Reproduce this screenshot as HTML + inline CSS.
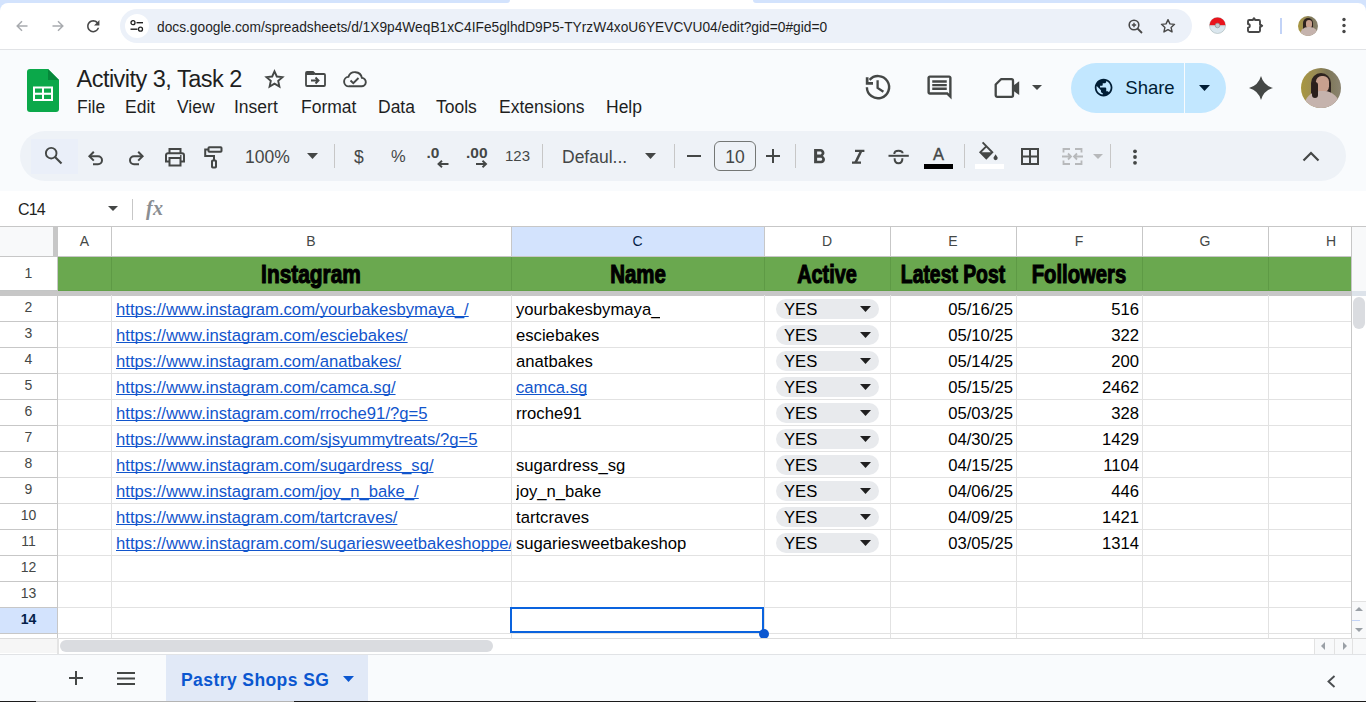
<!DOCTYPE html>
<html><head><meta charset="utf-8">
<style>
*{box-sizing:border-box;margin:0;padding:0}
html,body{width:1366px;height:702px;overflow:hidden;background:#f9fbfd;font-family:"Liberation Sans",sans-serif;color:#1f1f1f}
.a{position:absolute}
svg{position:absolute;overflow:visible}
#chrome{left:0;top:0;width:1366px;height:50px;background:#fff;border-bottom:1px solid #e1e3e6}
.tabstrip{top:0;height:3px;background:#d3e3fd}
.omni{left:120px;top:9px;width:1072px;height:34px;border-radius:17px;background:#ecf1f9}
.url{left:157px;top:19.5px;font-size:13.76px;color:#1f1f1f;white-space:nowrap;letter-spacing:0}
.menu{top:97px;font-size:17.5px;color:#1f1f1f;white-space:nowrap}
#tb{left:20px;top:131px;width:1326px;height:50px;border-radius:25px;background:#eef2f7}
.tbt{font-size:17.5px;color:#444746;white-space:nowrap}
.sep{width:1px;background:#c7c7c7;top:144px;height:24px}
#fbar{left:0;top:191px;width:1366px;height:36px;background:#fff;border-bottom:1px solid #c7c7c7}
#grid{left:0;top:227px;width:1352px;height:411px;background:#fff;overflow:hidden}
.hl{position:absolute;left:0;height:1px;background:#e2e2e2}
.vl{position:absolute;top:0;width:1px;background:#e2e2e2}
.ch{position:absolute;top:0;height:29px;font-size:14px;color:#444746;text-align:center;line-height:29px}
.rh{position:absolute;left:0;width:57px;text-align:center;font-size:14px;color:#444746}
.cell{position:absolute;color:#000;font-size:16.67px;white-space:nowrap;line-height:26px;height:28px;padding-top:2px;overflow:hidden}
.lnk{color:#1155cc;text-decoration:underline;text-decoration-skip-ink:none}
.hdr{position:absolute;top:30px;height:34px;font-weight:bold;font-size:25px;color:#000;line-height:34px;white-space:nowrap}
.hdr span{position:absolute;left:50%;top:0;transform:translateX(-50%) scaleX(0.75);-webkit-text-stroke:1.1px #000}
.chip{position:absolute;width:103px;height:20px;border-radius:10px;background:#e8eaed}
</style></head><body>
<!-- browser chrome -->
<div id="chrome" class="a"></div>
<div class="a tabstrip" style="left:0;width:510px;border-bottom-right-radius:6px"></div>
<div class="a tabstrip" style="left:753px;width:613px;border-bottom-left-radius:6px"></div>
<div class="a" style="left:0;top:3px;width:8px;height:8px;background:#d3e3fd"></div><div class="a" style="left:0;top:3px;width:16px;height:16px;background:#fff;border-top-left-radius:8px"></div><div class="a" style="left:1358px;top:3px;width:8px;height:8px;background:#d3e3fd"></div><div class="a" style="left:1350px;top:3px;width:16px;height:16px;background:#fff;border-top-right-radius:8px"></div>
<div class="a omni"></div>

<svg style="left:16px;top:20px" width="12" height="12" viewBox="0 0 12 12"><path d="M11.5 6H1.2M6 1.2L1.2 6L6 10.8" fill="none" stroke="#a8abaf" stroke-width="1.5"/></svg>
<svg style="left:52px;top:20px" width="12" height="12" viewBox="0 0 12 12"><path d="M0.5 6H10.8M6 1.2L10.8 6L6 10.8" fill="none" stroke="#a8abaf" stroke-width="1.5"/></svg>
<svg style="left:84.4px;top:17.2px" width="18.5" height="18.5" viewBox="0 0 24 24"><path fill="#474747" d="M17.65 6.35C16.2 4.9 14.21 4 12 4c-4.42 0-7.99 3.58-7.99 8s3.57 8 7.99 8c3.73 0 6.84-2.55 7.730-6h-2.08c-.82 2.33-3.04 4-5.65 4-3.31 0-6-2.69-6-6s2.69-6 6-6c1.66 0 3.14.69 4.22 1.78L13 11h7V4l-2.35 2.35z"/></svg>
<div class="a" style="left:125px;top:14px;width:24px;height:24px;border-radius:12px;background:#fff"></div>
<svg style="left:130px;top:20px" width="14" height="12" viewBox="0 0 14 12"><circle cx="3" cy="2.7" r="2" fill="none" stroke="#1f1f1f" stroke-width="1.3"/><path d="M6.5 2.7H13" stroke="#1f1f1f" stroke-width="1.4"/><circle cx="10.5" cy="9.2" r="2" fill="none" stroke="#1f1f1f" stroke-width="1.3"/><path d="M0.5 9.2H7.5" stroke="#1f1f1f" stroke-width="1.4"/></svg>
<div class="a url">docs.google.com/spreadsheets/d/1X9p4WeqB1xC4IFe5glhdD9P5-TYrzW4xoU6YEVCVU04/edit?gid=0#gid=0</div>
<svg style="left:1128px;top:19px" width="15" height="15" viewBox="0 0 15 15"><circle cx="6" cy="6" r="4.8" fill="none" stroke="#474747" stroke-width="1.6"/><path d="M9.5 9.5L14 14" stroke="#474747" stroke-width="1.8"/><path d="M6 3.8V8.2M3.8 6H8.2" stroke="#474747" stroke-width="1.4"/></svg>
<svg style="left:1160px;top:18px" width="16" height="16" viewBox="0 0 24 24"><path d="M12 2.5l2.9 6.3 6.9.7-5.2 4.6 1.5 6.8L12 17.4 5.9 20.9l1.5-6.8-5.2-4.6 6.9-.7z" fill="none" stroke="#474747" stroke-width="2.1" stroke-linejoin="round"/></svg>
<svg style="left:1209.2px;top:17.2px" width="17" height="17" viewBox="0 0 17 17"><circle cx="8.5" cy="8.5" r="8" fill="#dbe7ee" stroke="#9aa" stroke-width=".5"/><path d="M0.5 8.5A8 8 0 0 1 16.5 8.5Z" fill="#e8141c"/><path d="M0.5 8.8H16.5" stroke="#c8ced2" stroke-width="1"/><circle cx="8.5" cy="8.5" r="2.3" fill="#c4c9cc" stroke="#8d9396" stroke-width=".7"/></svg>
<svg style="left:1240px;top:10px" width="30" height="30" viewBox="1240 10 30 30"><path d="M1249.2 20H1252.6L1254 18.2L1255.4 20H1258.8a1.2 1.2 0 0 1 1.2 1.2V24.3L1262.2 25.8L1260 27.3V30.8a1.2 1.2 0 0 1-1.2 1.2H1249.2a1.2 1.2 0 0 1-1.2-1.2V27.6a1.8 1.8 0 0 0 0-3.6V21.2a1.2 1.2 0 0 1 1.2-1.2z" fill="none" stroke="#474747" stroke-width="1.9" stroke-linejoin="round"/><path d="M1252.3 20.5L1254 17.8L1255.7 20.5Z M1259.5 24L1262.8 25.8L1259.5 27.6Z" fill="#474747"/></svg>
<div class="a" style="left:1280px;top:18px;width:2px;height:16px;background:#c2d3f7"></div>
<div class="a" style="left:1298px;top:15.5px;width:20px;height:20px;border-radius:10px;overflow:hidden;background:linear-gradient(90deg,#a8963f 0%,#9a8c55 35%,#7d7656 65%,#8b8470 100%)"><div class="a" style="left:5px;top:2px;width:10px;height:14px;border-radius:5px 5px 2px 2px;background:#2e231f"></div><div class="a" style="left:7.5px;top:4px;width:6.5px;height:8.5px;border-radius:3px;background:#c8a08e"></div><div class="a" style="left:1.5px;top:11.5px;width:18px;height:11px;border-radius:8px 8px 0 0;background:#c5b3ad"></div></div>
<svg style="left:1342px;top:17px" width="4" height="17" viewBox="0 0 4 17"><circle cx="2" cy="2.5" r="1.7" fill="#474747"/><circle cx="2" cy="8.5" r="1.7" fill="#474747"/><circle cx="2" cy="14.5" r="1.7" fill="#474747"/></svg>

<!-- sheets header -->
<svg style="left:27px;top:69px" width="32" height="43" viewBox="0 0 32 43"><path d="M3 0H21L32 11V40a3 3 0 0 1-3 3H3a3 3 0 0 1-3-3V3a3 3 0 0 1 3-3z" fill="#0ba84a"/><path d="M21 0L32 11H21z" fill="#06873a"/><rect x="6" y="17.5" width="20" height="14.5" fill="#fff"/><rect x="8" y="19.5" width="7" height="4.2" fill="#0ba84a"/><rect x="17" y="19.5" width="7" height="4.2" fill="#0ba84a"/><rect x="8" y="25.8" width="7" height="4.2" fill="#0ba84a"/><rect x="17" y="25.8" width="7" height="4.2" fill="#0ba84a"/></svg>
<div class="a" style="left:76.5px;top:66px;font-size:23.5px;letter-spacing:-0.52px;color:#1f1f1f;white-space:nowrap">Activity 3, Task 2</div>
<svg style="left:264px;top:69px" width="21" height="19" viewBox="0 0 21 19"><path d="M10.5 2.3l2.3 5.2 5.7.6-4.3 3.8 1.2 5.6-4.9-2.9-4.9 2.9 1.2-5.6-4.3-3.8 5.7-.6z" fill="none" stroke="#444746" stroke-width="1.9" stroke-linejoin="miter"/></svg>
<svg style="left:305px;top:71px" width="21" height="16" viewBox="0 0 21 16"><path d="M2 1H8L10 3H19a1 1 0 0 1 1 1V14a1 1 0 0 1-1 1H2a1 1 0 0 1-1-1V2a1 1 0 0 1 1-1z" fill="none" stroke="#444746" stroke-width="1.8"/><path d="M1 1.5H9V4H1z" fill="#444746"/><path d="M6 9.5H13M10.5 6.5L13.5 9.5L10.5 12.5" fill="none" stroke="#444746" stroke-width="1.9"/></svg>
<svg style="left:343px;top:71px" width="24" height="17" viewBox="0 0 24 17"><path d="M6.2 15.3H18.3a4.2 4.2 0 0 0 .6-8.4A7 7 0 0 0 5.4 5.9 4.7 4.7 0 0 0 6.2 15.3z" fill="none" stroke="#444746" stroke-width="1.9"/><path d="M7.5 9.5L10.3 12.2L15.5 7" fill="none" stroke="#444746" stroke-width="1.9"/></svg>
<div class="a menu" style="left:77px">File</div>
<div class="a menu" style="left:125px">Edit</div>
<div class="a menu" style="left:177px">View</div>
<div class="a menu" style="left:234px">Insert</div>
<div class="a menu" style="left:301px">Format</div>
<div class="a menu" style="left:378px">Data</div>
<div class="a menu" style="left:436px">Tools</div>
<div class="a menu" style="left:499px">Extensions</div>
<div class="a menu" style="left:606px">Help</div>

<!-- header right -->
<svg style="left:860px;top:70px" width="36" height="36" viewBox="0 0 36 36"><path d="M6.9 17.2A11.1 11.1 0 1 0 9.6 9.9" fill="none" stroke="#444746" stroke-width="2.4"/><path d="M5.8 7.3H8.5V12H13V14.7H5.8Z" fill="#444746"/><path d="M17.6 10.2V17.9L23.4 21.7" fill="none" stroke="#444746" stroke-width="2.3"/></svg>
<svg style="left:925px;top:73px" width="29" height="29" viewBox="0 0 24 24"><path fill="#444746" d="M21.99 4c0-1.1-.89-2-1.99-2H4c-1.1 0-2 .9-2 2v12c0 1.1.9 2 2 2h14l4 4-.01-18zM20 4v13.17L18.83 16H4V4h16zM6 12h12v2H6zm0-3h12v2H6zm0-3h12v2H6z"/></svg>
<svg style="left:994px;top:78px" width="27" height="21" viewBox="0 0 27 21"><path d="M7 1.2H17.5a1.5 1.5 0 0 1 1.5 1.5V17.3a1.5 1.5 0 0 1-1.5 1.5H3.2a1.5 1.5 0 0 1-1.5-1.5V6.5z" fill="none" stroke="#444746" stroke-width="2.3" stroke-linejoin="round"/><path d="M19 7.8L25.2 3.3V17.1L19 12.6z" fill="#444746"/></svg>
<svg style="left:1032px;top:85px" width="10" height="5" viewBox="0 0 10 5"><path d="M0 0H10L5 5z" fill="#444746"/></svg>
<div class="a" style="left:1071px;top:63px;width:155px;height:50px;border-radius:25px;background:#c2e7ff"></div>
<div class="a" style="left:1184px;top:63px;width:1px;height:50px;background:#f9fbfd"></div>
<svg style="left:1092.9px;top:77px" width="21.2" height="21.2" viewBox="0 0 24 24"><path fill="#001d35" d="M12 2C6.48 2 2 6.48 2 12s4.48 10 10 10 10-4.480 10-10S17.52 2 12 2zm-1 17.93c-3.95-.49-7-3.85-7-7.93 0-.62.08-1.21.21-1.79L9 15v1c0 1.1.9 2 2 2v1.930zm6.9-2.54c-.26-.81-1-1.39-1.9-1.39h-1v-3c0-.55-.45-1-1-1H8v-2h2c.55 0 1-.45 1-1V7h2c1.1 0 2-.9 2-2v-.41c2.93 1.19 5 4.06 5 7.41 0 2.08-.8 3.970-2.1 5.39z"/></svg>
<div class="a" style="left:1125.3px;top:76.5px;font-size:18.5px;color:#001d35;white-space:nowrap">Share</div>
<svg style="left:1199px;top:85px" width="11" height="6" viewBox="0 0 11 6"><path d="M0 0H11L5.5 6z" fill="#001d35"/></svg>
<svg style="left:1248.5px;top:76px" width="24" height="24" viewBox="0 0 24 24"><path fill="#444746" d="M12 0Q14.6 9.4 24 12Q14.6 14.6 12 24Q9.4 14.6 0 12Q9.4 9.4 12 0Z"/></svg>
<div class="a" style="left:1301px;top:68px;width:40px;height:40px;border-radius:20px;overflow:hidden;background:linear-gradient(90deg,#a8963f 0%,#9a8c55 35%,#7d7656 65%,#8b8470 100%)">
 <div class="a" style="left:10px;top:5px;width:20px;height:28px;border-radius:10px 10px 4px 4px;background:#2e231f"></div>
 <div class="a" style="left:15px;top:8px;width:13px;height:17px;border-radius:6px 6px 7px 7px;background:#c8a08e"></div>
 <div class="a" style="left:3px;top:23px;width:36px;height:22px;border-radius:16px 16px 0 0;background:#c5b3ad"></div>
 <div class="a" style="left:11px;top:14px;width:6px;height:16px;border-radius:3px;background:#2a1f1b"></div>
</div>
<!-- toolbar -->
<div id="tb" class="a"></div>
<div class="a" style="left:31px;top:139px;width:47px;height:35px;background:#eaeff9"></div>
<svg style="left:43px;top:145px" width="21" height="21" viewBox="0 0 21 21"><circle cx="8.2" cy="8.2" r="5.3" fill="none" stroke="#444746" stroke-width="1.9"/><path d="M12 12L18.5 18.5" stroke="#444746" stroke-width="2.1"/></svg>
<svg style="left:87px;top:150px" width="18" height="16" viewBox="0 0 18 16"><path d="M3 6.2H11a4 4 0 0 1 0 8H6" fill="none" stroke="#444746" stroke-width="2"/><path d="M6.8 1.8L2.4 6.2L6.8 10.6" fill="none" stroke="#444746" stroke-width="2"/></svg>
<svg style="left:127px;top:150px" width="18" height="16" viewBox="0 0 18 16"><path d="M15 6.2H7a4 4 0 0 0 0 8H12" fill="none" stroke="#444746" stroke-width="2"/><path d="M11.2 1.8L15.6 6.2L11.2 10.6" fill="none" stroke="#444746" stroke-width="2"/></svg>
<svg style="left:164px;top:147px" width="22" height="20" viewBox="0 0 22 20"><path d="M5.5 6V2H16.5V6" fill="none" stroke="#444746" stroke-width="2"/><path d="M5.5 14.5H2V8.2a2 2 0 0 1 2-2H18a2 2 0 0 1 2 2V14.5H16.5" fill="none" stroke="#444746" stroke-width="2"/><rect x="5.5" y="11" width="11" height="7.5" fill="none" stroke="#444746" stroke-width="2"/><circle cx="16.8" cy="9" r=".9" fill="#444746"/></svg>
<svg style="left:203px;top:146px" width="20" height="23" viewBox="0 0 20 23"><rect x="5.5" y="1.2" width="13" height="4.6" rx=".8" fill="none" stroke="#444746" stroke-width="2"/><path d="M5.5 3.5H2.2V10H11V14" fill="none" stroke="#444746" stroke-width="2"/><rect x="9" y="14.5" width="4" height="7" rx=".8" fill="none" stroke="#444746" stroke-width="2"/></svg>
<div class="a tbt" style="left:245px;top:147px">100%</div>
<svg style="left:307px;top:153px" width="11" height="6" viewBox="0 0 11 6"><path d="M0 0H11L5.5 6z" fill="#444746"/></svg>
<div class="a sep" style="left:334px"></div>
<div class="a tbt" style="left:354px;top:147px">$</div>
<div class="a tbt" style="left:391px;top:147px;font-size:16.5px">%</div>
<div class="a" style="left:426.5px;top:143.5px;font-size:15.5px;font-weight:bold;color:#444746">.0</div>
<svg style="left:437px;top:159.5px" width="12" height="8" viewBox="0 0 12 8"><path d="M11.5 4H2M5 0.8L1.5 4L5 7.2" fill="none" stroke="#444746" stroke-width="1.9"/></svg>
<div class="a" style="left:466px;top:143.5px;font-size:15.5px;font-weight:bold;color:#444746;letter-spacing:0px">.00</div>
<svg style="left:476px;top:159.5px" width="12" height="8" viewBox="0 0 12 8"><path d="M0 4H9.5M6.5 0.8L10 4L6.5 7.2" fill="none" stroke="#444746" stroke-width="1.9"/></svg>
<div class="a" style="left:505px;top:147px;font-size:15px;color:#444746">123</div>
<div class="a sep" style="left:542px"></div>
<div class="a tbt" style="left:562px;top:147px">Defaul...</div>
<svg style="left:645px;top:153px" width="11" height="6" viewBox="0 0 11 6"><path d="M0 0H11L5.5 6z" fill="#444746"/></svg>
<div class="a sep" style="left:674px"></div>
<div class="a" style="left:687px;top:155px;width:14px;height:2px;background:#444746"></div>
<div class="a" style="left:714px;top:141px;width:42px;height:30px;border:1px solid #747775;border-radius:6px"></div>
<div class="a tbt" style="left:714px;top:147px;width:42px;text-align:center">10</div>
<div class="a" style="left:766px;top:155px;width:14px;height:2px;background:#444746"></div>
<div class="a" style="left:772px;top:149px;width:2px;height:14px;background:#444746"></div>
<div class="a sep" style="left:795px"></div>
<svg style="left:806.6px;top:144.9px" width="24.3" height="24.3" viewBox="0 0 24 24"><path fill="#444746" d="M15.6 10.79c.97-.67 1.65-1.77 1.65-2.79 0-2.26-1.75-4-4-4H7v14h7.04c2.090 0 3.71-1.7 3.71-3.79 0-1.52-.86-2.82-2.15-3.42zM10 6.5h3c.83 0 1.5.67 1.5 1.5s-.67 1.5-1.5 1.5h-3v-3zm3.5 9H10v-3h3.5c.83 0 1.5.67 1.5 1.5s-.67 1.5-1.5 1.5z"/></svg>
<svg style="left:850px;top:146px" width="16" height="20" viewBox="0 0 16 20"><path d="M5 4.8H14.4M2 16.6H11" stroke="#444746" stroke-width="2.3"/><path d="M11.3 4.8L5.5 16.6" stroke="#444746" stroke-width="2.5"/></svg>
<svg style="left:888px;top:146px" width="21" height="20" viewBox="0 0 21 20"><path d="M0.5 9.8H20.8" stroke="#444746" stroke-width="2"/><path d="M6.3 8C6.3 5.6 8.3 4.7 10.5 4.7S14.6 5.5 14.6 7.3" fill="none" stroke="#444746" stroke-width="2"/><path d="M6.6 12.2C6.6 15.6 8.5 17.3 10.5 17.3S14.4 15.6 14.4 12.2" fill="none" stroke="#444746" stroke-width="2"/></svg>
<div class="a" style="left:933px;top:144.5px;font-size:16.5px;color:#444746;-webkit-text-stroke:0.4px #444746">A</div>
<div class="a" style="left:924px;top:164px;width:29px;height:5px;background:#000"></div>
<div class="a sep" style="left:964px"></div>
<svg style="left:972px;top:138px" width="32" height="34" viewBox="0 0 32 34"><path d="M10.6 4.3L20.3 14.3L14.3 20.3L8.3 14.3L14 8.6" fill="none" stroke="#444746" stroke-width="1.9" stroke-linejoin="miter"/><path d="M8.5 14.3H20.3L14.3 20.3Z" fill="#444746"/><path d="M23.6 16.2C22.6 17.8 21.5 19 21.5 20.1a2.1 2.1 0 0 0 4.2 0C25.7 19 24.6 17.8 23.6 16.2Z" fill="#444746"/></svg>
<div class="a" style="left:975px;top:164px;width:29px;height:5px;background:#fff"></div>
<svg style="left:1021px;top:148px" width="18" height="17" viewBox="0 0 18 17"><rect x="1" y="1" width="16" height="15" fill="none" stroke="#444746" stroke-width="2"/><path d="M9 1V16M1 8.5H17" stroke="#444746" stroke-width="2"/></svg>
<svg style="left:1062px;top:148px" width="21" height="17" viewBox="0 0 21 17"><path d="M8 1H1.5V4.5M1.5 12.5V16H8M13 1H19.5V4.5M19.5 12.5V16H13" fill="none" stroke="#b7b9bb" stroke-width="1.8"/><path d="M0 8.5H9M6 5.5L9 8.5L6 11.5M21 8.5H12M15 5.5L12 8.5L15 11.5" fill="none" stroke="#b7b9bb" stroke-width="1.8"/></svg>
<svg style="left:1093px;top:154px" width="10" height="5" viewBox="0 0 10 5"><path d="M0 0H10L5 5z" fill="#b7b9bb"/></svg>
<div class="a sep" style="left:1110px"></div>
<svg style="left:1132px;top:148px" width="6" height="18" viewBox="0 0 6 18"><circle cx="3" cy="3.3" r="1.9" fill="#444746"/><circle cx="3" cy="9" r="1.9" fill="#444746"/><circle cx="3" cy="14.8" r="1.9" fill="#444746"/></svg>
<svg style="left:1302px;top:151px" width="18" height="11" viewBox="0 0 18 11"><path d="M1.5 9.5L9 2L16.5 9.5" fill="none" stroke="#444746" stroke-width="2.2"/></svg>

<!-- formula bar -->
<div id="fbar" class="a"></div>
<div class="a" style="left:18px;top:200.5px;font-size:16px;color:#1f1f1f;letter-spacing:-0.9px">C14</div>
<svg style="left:108px;top:206px" width="10" height="5" viewBox="0 0 10 5"><path d="M0 0H10L5 5z" fill="#444746"/></svg>
<div class="a" style="left:132px;top:199px;width:1px;height:21px;background:#c7c7c7"></div>
<div class="a" style="left:146px;top:196.5px;font-family:'Liberation Serif',serif;font-style:italic;font-weight:bold;font-size:20px;color:#8a8e92;letter-spacing:0.3px">fx</div>
<!-- grid -->
<div id="grid" class="a">
<div class="a" style="left:0px;top:0px;width:53px;height:29px;background:#f8f9fa"></div>
<div class="a" style="left:53px;top:0px;width:5px;height:29px;background:#c7c7c7"></div>
<div class="a" style="left:512px;top:0px;width:252px;height:29px;background:#d3e3fd"></div>
<div class="a" style="left:0px;top:29px;width:1351px;height:1px;background:#c7c7c7"></div>
<div class="a" style="left:111px;top:0px;width:1px;height:29px;background:#c7c7c7"></div>
<div class="a" style="left:511px;top:0px;width:1px;height:29px;background:#c7c7c7"></div>
<div class="a" style="left:764px;top:0px;width:1px;height:29px;background:#c7c7c7"></div>
<div class="a" style="left:890px;top:0px;width:1px;height:29px;background:#c7c7c7"></div>
<div class="a" style="left:1016px;top:0px;width:1px;height:29px;background:#c7c7c7"></div>
<div class="a" style="left:1142px;top:0px;width:1px;height:29px;background:#c7c7c7"></div>
<div class="a" style="left:1268px;top:0px;width:1px;height:29px;background:#c7c7c7"></div>
<div class="a ch" style="left:58px;width:53px;">A</div>
<div class="a ch" style="left:111px;width:400px;">B</div>
<div class="a ch" style="left:511px;width:253px;color:#041e49">C</div>
<div class="a ch" style="left:764px;width:126px;">D</div>
<div class="a ch" style="left:890px;width:126px;">E</div>
<div class="a ch" style="left:1016px;width:126px;">F</div>
<div class="a ch" style="left:1142px;width:126px;">G</div>
<div class="a ch" style="left:1268px;width:126px;">H</div>
<div class="a" style="left:58px;top:30px;width:1293px;height:34px;background:#6aa84f"></div>
<div class="a" style="left:111px;top:30px;width:1px;height:34px;background:#5e9a45"></div>
<div class="a" style="left:511px;top:30px;width:1px;height:34px;background:#5e9a45"></div>
<div class="a" style="left:764px;top:30px;width:1px;height:34px;background:#5e9a45"></div>
<div class="a" style="left:890px;top:30px;width:1px;height:34px;background:#5e9a45"></div>
<div class="a" style="left:1016px;top:30px;width:1px;height:34px;background:#5e9a45"></div>
<div class="a" style="left:1142px;top:30px;width:1px;height:34px;background:#5e9a45"></div>
<div class="a" style="left:1268px;top:30px;width:1px;height:34px;background:#5e9a45"></div>
<div class="a" style="left:58px;top:63px;width:1293px;height:1px;background:#62a048"></div>
<div class="a" style="left:0px;top:63px;width:57px;height:1px;background:#c4c6c6"></div>
<div class="a" style="left:0px;top:64px;width:1351px;height:5px;background:#c7c7c7"></div>
<div class="a" style="left:57px;top:30px;width:1px;height:381px;background:#c7c7c7"></div>
<div class="a" style="left:0px;top:381px;width:57px;height:25px;background:#d3e3fd"></div>
<div class="a" style="left:0px;top:94px;width:57px;height:1px;background:#c7c7c7"></div>
<div class="a" style="left:58px;top:94px;width:1293px;height:1px;background:#e2e2e2"></div>
<div class="a" style="left:0px;top:120px;width:57px;height:1px;background:#c7c7c7"></div>
<div class="a" style="left:58px;top:120px;width:1293px;height:1px;background:#e2e2e2"></div>
<div class="a" style="left:0px;top:146px;width:57px;height:1px;background:#c7c7c7"></div>
<div class="a" style="left:58px;top:146px;width:1293px;height:1px;background:#e2e2e2"></div>
<div class="a" style="left:0px;top:172px;width:57px;height:1px;background:#c7c7c7"></div>
<div class="a" style="left:58px;top:172px;width:1293px;height:1px;background:#e2e2e2"></div>
<div class="a" style="left:0px;top:198px;width:57px;height:1px;background:#c7c7c7"></div>
<div class="a" style="left:58px;top:198px;width:1293px;height:1px;background:#e2e2e2"></div>
<div class="a" style="left:0px;top:224px;width:57px;height:1px;background:#c7c7c7"></div>
<div class="a" style="left:58px;top:224px;width:1293px;height:1px;background:#e2e2e2"></div>
<div class="a" style="left:0px;top:250px;width:57px;height:1px;background:#c7c7c7"></div>
<div class="a" style="left:58px;top:250px;width:1293px;height:1px;background:#e2e2e2"></div>
<div class="a" style="left:0px;top:276px;width:57px;height:1px;background:#c7c7c7"></div>
<div class="a" style="left:58px;top:276px;width:1293px;height:1px;background:#e2e2e2"></div>
<div class="a" style="left:0px;top:302px;width:57px;height:1px;background:#c7c7c7"></div>
<div class="a" style="left:58px;top:302px;width:1293px;height:1px;background:#e2e2e2"></div>
<div class="a" style="left:0px;top:328px;width:57px;height:1px;background:#c7c7c7"></div>
<div class="a" style="left:58px;top:328px;width:1293px;height:1px;background:#e2e2e2"></div>
<div class="a" style="left:0px;top:354px;width:57px;height:1px;background:#c7c7c7"></div>
<div class="a" style="left:58px;top:354px;width:1293px;height:1px;background:#e2e2e2"></div>
<div class="a" style="left:0px;top:380px;width:57px;height:1px;background:#c7c7c7"></div>
<div class="a" style="left:58px;top:380px;width:1293px;height:1px;background:#e2e2e2"></div>
<div class="a" style="left:0px;top:406px;width:57px;height:1px;background:#c7c7c7"></div>
<div class="a" style="left:58px;top:406px;width:1293px;height:1px;background:#e2e2e2"></div>
<div class="a" style="left:111px;top:68px;width:1px;height:343px;background:#e2e2e2"></div>
<div class="a" style="left:511px;top:68px;width:1px;height:343px;background:#e2e2e2"></div>
<div class="a" style="left:764px;top:68px;width:1px;height:343px;background:#e2e2e2"></div>
<div class="a" style="left:890px;top:68px;width:1px;height:343px;background:#e2e2e2"></div>
<div class="a" style="left:1016px;top:68px;width:1px;height:343px;background:#e2e2e2"></div>
<div class="a" style="left:1142px;top:68px;width:1px;height:343px;background:#e2e2e2"></div>
<div class="a" style="left:1268px;top:68px;width:1px;height:343px;background:#e2e2e2"></div>
<div class="a" style="left:1351px;top:0px;width:1px;height:411px;background:#c7c7c7"></div>
<div class="a rh" style="top:30px;height:33px;line-height:33px;">1</div>
<div class="a rh" style="top:68px;height:26px;line-height:24px;">2</div>
<div class="a rh" style="top:94px;height:26px;line-height:24px;">3</div>
<div class="a rh" style="top:120px;height:26px;line-height:24px;">4</div>
<div class="a rh" style="top:146px;height:26px;line-height:24px;">5</div>
<div class="a rh" style="top:172px;height:26px;line-height:24px;">6</div>
<div class="a rh" style="top:198px;height:26px;line-height:24px;">7</div>
<div class="a rh" style="top:224px;height:26px;line-height:24px;">8</div>
<div class="a rh" style="top:250px;height:26px;line-height:24px;">9</div>
<div class="a rh" style="top:276px;height:26px;line-height:24px;">10</div>
<div class="a rh" style="top:302px;height:26px;line-height:24px;">11</div>
<div class="a rh" style="top:328px;height:26px;line-height:24px;">12</div>
<div class="a rh" style="top:354px;height:26px;line-height:24px;">13</div>
<div class="a rh" style="top:380px;height:26px;line-height:24px;font-weight:bold;color:#041e49">14</div>
<div class="a hdr" style="left:111px;width:400px"><span style="transform:translateX(-50%) scaleX(0.835)">Instagram</span></div>
<div class="a hdr" style="left:511px;width:253px"><span style="transform:translateX(-50%) scaleX(0.817)">Name</span></div>
<div class="a hdr" style="left:764px;width:126px"><span style="transform:translateX(-50%) scaleX(0.794)">Active</span></div>
<div class="a hdr" style="left:890px;width:126px"><span style="transform:translateX(-50%) scaleX(0.774)">Latest Post</span></div>
<div class="a hdr" style="left:1016px;width:126px"><span style="transform:translateX(-50%) scaleX(0.81)">Followers</span></div>
<div class="a cell lnk" style="left:116px;top:68px;width:395px">https://www.instagram.com/yourbakesbymaya_/</div>
<div class="a cell" style="left:516px;top:68px">yourbakesbymaya_</div>
<div class="a chip" style="left:776px;top:71.5px"></div>
<div class="a cell" style="left:784px;top:68px">YES</div>
<svg style="left:860px;top:78.5px" width="11" height="6" viewBox="0 0 11 6"><path d="M0 0H11L5.5 6z" fill="#1f1f1f"/></svg>
<div class="a cell" style="left:890px;top:68px;width:123px;text-align:right">05/16/25</div>
<div class="a cell" style="left:1016px;top:68px;width:123px;text-align:right">516</div>
<div class="a cell lnk" style="left:116px;top:94px;width:395px">https://www.instagram.com/esciebakes/</div>
<div class="a cell" style="left:516px;top:94px">esciebakes</div>
<div class="a chip" style="left:776px;top:97.5px"></div>
<div class="a cell" style="left:784px;top:94px">YES</div>
<svg style="left:860px;top:104.5px" width="11" height="6" viewBox="0 0 11 6"><path d="M0 0H11L5.5 6z" fill="#1f1f1f"/></svg>
<div class="a cell" style="left:890px;top:94px;width:123px;text-align:right">05/10/25</div>
<div class="a cell" style="left:1016px;top:94px;width:123px;text-align:right">322</div>
<div class="a cell lnk" style="left:116px;top:120px;width:395px">https://www.instagram.com/anatbakes/</div>
<div class="a cell" style="left:516px;top:120px">anatbakes</div>
<div class="a chip" style="left:776px;top:123.5px"></div>
<div class="a cell" style="left:784px;top:120px">YES</div>
<svg style="left:860px;top:130.5px" width="11" height="6" viewBox="0 0 11 6"><path d="M0 0H11L5.5 6z" fill="#1f1f1f"/></svg>
<div class="a cell" style="left:890px;top:120px;width:123px;text-align:right">05/14/25</div>
<div class="a cell" style="left:1016px;top:120px;width:123px;text-align:right">200</div>
<div class="a cell lnk" style="left:116px;top:146px;width:395px">https://www.instagram.com/camca.sg/</div>
<div class="a cell lnk" style="left:516px;top:146px">camca.sg</div>
<div class="a chip" style="left:776px;top:149.5px"></div>
<div class="a cell" style="left:784px;top:146px">YES</div>
<svg style="left:860px;top:156.5px" width="11" height="6" viewBox="0 0 11 6"><path d="M0 0H11L5.5 6z" fill="#1f1f1f"/></svg>
<div class="a cell" style="left:890px;top:146px;width:123px;text-align:right">05/15/25</div>
<div class="a cell" style="left:1016px;top:146px;width:123px;text-align:right">2462</div>
<div class="a cell lnk" style="left:116px;top:172px;width:395px">https://www.instagram.com/rroche91/?g=5</div>
<div class="a cell" style="left:516px;top:172px">rroche91</div>
<div class="a chip" style="left:776px;top:175.5px"></div>
<div class="a cell" style="left:784px;top:172px">YES</div>
<svg style="left:860px;top:182.5px" width="11" height="6" viewBox="0 0 11 6"><path d="M0 0H11L5.5 6z" fill="#1f1f1f"/></svg>
<div class="a cell" style="left:890px;top:172px;width:123px;text-align:right">05/03/25</div>
<div class="a cell" style="left:1016px;top:172px;width:123px;text-align:right">328</div>
<div class="a cell lnk" style="left:116px;top:198px;width:395px">https://www.instagram.com/sjsyummytreats/?g=5</div>
<div class="a chip" style="left:776px;top:201.5px"></div>
<div class="a cell" style="left:784px;top:198px">YES</div>
<svg style="left:860px;top:208.5px" width="11" height="6" viewBox="0 0 11 6"><path d="M0 0H11L5.5 6z" fill="#1f1f1f"/></svg>
<div class="a cell" style="left:890px;top:198px;width:123px;text-align:right">04/30/25</div>
<div class="a cell" style="left:1016px;top:198px;width:123px;text-align:right">1429</div>
<div class="a cell lnk" style="left:116px;top:224px;width:395px">https://www.instagram.com/sugardress_sg/</div>
<div class="a cell" style="left:516px;top:224px">sugardress_sg</div>
<div class="a chip" style="left:776px;top:227.5px"></div>
<div class="a cell" style="left:784px;top:224px">YES</div>
<svg style="left:860px;top:234.5px" width="11" height="6" viewBox="0 0 11 6"><path d="M0 0H11L5.5 6z" fill="#1f1f1f"/></svg>
<div class="a cell" style="left:890px;top:224px;width:123px;text-align:right">04/15/25</div>
<div class="a cell" style="left:1016px;top:224px;width:123px;text-align:right">1104</div>
<div class="a cell lnk" style="left:116px;top:250px;width:395px">https://www.instagram.com/joy_n_bake_/</div>
<div class="a cell" style="left:516px;top:250px">joy_n_bake</div>
<div class="a chip" style="left:776px;top:253.5px"></div>
<div class="a cell" style="left:784px;top:250px">YES</div>
<svg style="left:860px;top:260.5px" width="11" height="6" viewBox="0 0 11 6"><path d="M0 0H11L5.5 6z" fill="#1f1f1f"/></svg>
<div class="a cell" style="left:890px;top:250px;width:123px;text-align:right">04/06/25</div>
<div class="a cell" style="left:1016px;top:250px;width:123px;text-align:right">446</div>
<div class="a cell lnk" style="left:116px;top:276px;width:395px">https://www.instagram.com/tartcraves/</div>
<div class="a cell" style="left:516px;top:276px">tartcraves</div>
<div class="a chip" style="left:776px;top:279.5px"></div>
<div class="a cell" style="left:784px;top:276px">YES</div>
<svg style="left:860px;top:286.5px" width="11" height="6" viewBox="0 0 11 6"><path d="M0 0H11L5.5 6z" fill="#1f1f1f"/></svg>
<div class="a cell" style="left:890px;top:276px;width:123px;text-align:right">04/09/25</div>
<div class="a cell" style="left:1016px;top:276px;width:123px;text-align:right">1421</div>
<div class="a cell lnk" style="left:116px;top:302px;width:395px">https://www.instagram.com/sugariesweetbakeshoppe/</div>
<div class="a cell" style="left:516px;top:302px">sugariesweetbakeshop</div>
<div class="a chip" style="left:776px;top:305.5px"></div>
<div class="a cell" style="left:784px;top:302px">YES</div>
<svg style="left:860px;top:312.5px" width="11" height="6" viewBox="0 0 11 6"><path d="M0 0H11L5.5 6z" fill="#1f1f1f"/></svg>
<div class="a cell" style="left:890px;top:302px;width:123px;text-align:right">03/05/25</div>
<div class="a cell" style="left:1016px;top:302px;width:123px;text-align:right">1314</div>
<div class="a" style="left:510px;top:380px;width:254px;height:26px;border:2px solid #0a63de"></div>
<div class="a" style="left:759px;top:401.5px;width:10px;height:10px;border-radius:5px;background:#0b57d0"></div>
</div>
<!-- vertical scrollbar -->
<div class="a" style="left:1352px;top:227px;width:14px;height:411px;background:#fff"></div>
<div class="a" style="left:1352px;top:227px;width:14px;height:64px;background:#f8f9fa"></div>
<div class="a" style="left:1352px;top:291px;width:14px;height:5px;background:#dde3ea"></div>
<div class="a" style="left:1353px;top:297px;width:12px;height:32px;border-radius:6px;background:#dadce0"></div>
<div class="a" style="left:1352px;top:601px;width:14px;height:37px;background:#f8f9fa;border-top:1px solid #e2e2e2"></div>
<div class="a" style="left:1352px;top:620px;width:8px;height:1px;background:#c2d3f7"></div>
<svg style="left:1355px;top:607px" width="8" height="4" viewBox="0 0 8 4"><path d="M0 4H8L4 0z" fill="#9aa0a6"/></svg>
<svg style="left:1355px;top:628px" width="8" height="4" viewBox="0 0 8 4"><path d="M0 0H8L4 4z" fill="#9aa0a6"/></svg>
<!-- horizontal scrollbar -->
<div class="a" style="left:0;top:638px;width:1366px;height:16px;background:#fff;border-top:1px solid #dcdcdc"></div>
<div class="a" style="left:0;top:639px;width:57px;height:14px;background:#f6f6f6"></div>
<div class="a" style="left:57px;top:638px;width:2px;height:16px;background:#e4e4e4"></div>
<div class="a" style="left:60px;top:640px;width:433px;height:12px;border-radius:6px;background:#dadce0"></div>
<div class="a" style="left:1314px;top:639px;width:38px;height:15px;background:#f8f9fa;border-left:1px solid #e2e2e2"></div>
<div class="a" style="left:1334px;top:639px;width:1px;height:15px;background:#e2e2e2"></div>
<div class="a" style="left:1352px;top:639px;width:14px;height:15px;background:#f8f9fa;border-left:1px solid #e2e2e2"></div>
<svg style="left:1321px;top:642px" width="4" height="8" viewBox="0 0 4 8"><path d="M4 0V8L0 4z" fill="#9aa0a6"/></svg>
<svg style="left:1343px;top:642px" width="4" height="8" viewBox="0 0 4 8"><path d="M0 0V8L4 4z" fill="#9aa0a6"/></svg>
<!-- sheet bar -->
<div class="a" style="left:0;top:654px;width:1366px;height:48px;background:#f9fbfd;border-top:1px solid #e1e3e6"></div>
<div class="a" style="left:69px;top:677px;width:14px;height:2px;background:#444746"></div>
<div class="a" style="left:75px;top:671px;width:2px;height:14px;background:#444746"></div>
<svg style="left:117px;top:672px" width="18" height="13" viewBox="0 0 18 13"><path d="M0 1H18M0 6.5H18M0 12H18" stroke="#444746" stroke-width="2"/></svg>
<div class="a" style="left:166px;top:655px;width:202px;height:47px;background:#e1e9f7"></div>
<div class="a" style="left:181px;top:669.5px;font-size:17.5px;font-weight:bold;color:#0b57d0;white-space:nowrap;letter-spacing:0.42px">Pastry Shops SG</div>
<svg style="left:343px;top:676px" width="11" height="6" viewBox="0 0 11 6"><path d="M0 0H11L5.5 6z" fill="#0b57d0"/></svg>
<svg style="left:1326px;top:675px" width="10" height="13" viewBox="0 0 10 13"><path d="M8.5 1L2.5 6.5L8.5 12" fill="none" stroke="#4a4d50" stroke-width="1.9"/></svg>
<div class="a" style="left:0;top:700.5px;width:1366px;height:1.5px;background:#1a1a1a"></div><div class="a" style="left:36px;top:700.5px;width:258px;height:1.5px;background:#b4b4b4"></div>
</body></html>
